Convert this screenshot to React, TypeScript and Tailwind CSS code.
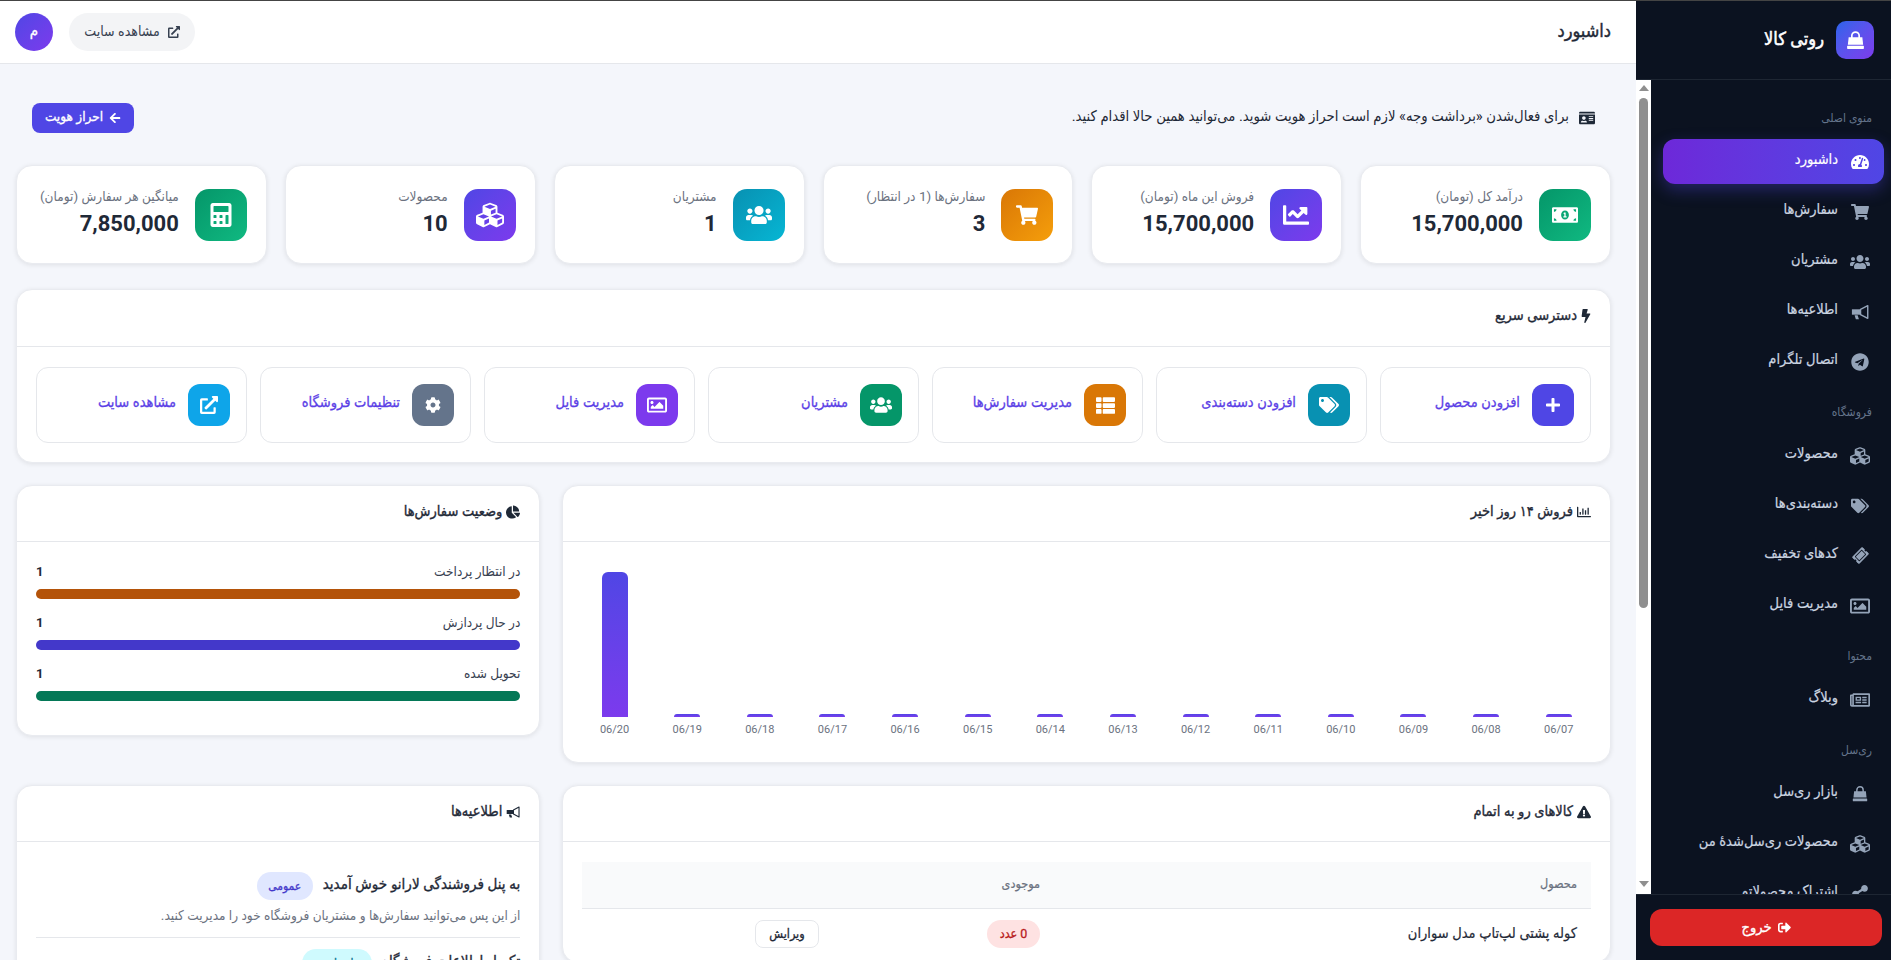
import type { ReactNode } from 'react';
import {
  FaTachometerAlt, FaShoppingCart, FaUsers, FaTelegram, FaCubes, FaTags, FaTicketAlt, FaRegImage,
  FaRegNewspaper, FaShareAlt, FaSignOutAlt, FaExternalLinkAlt, FaIdCard, FaArrowLeft, FaMoneyBillAlt,
  FaChartLine, FaCalculator, FaBolt, FaPlus, FaThList, FaCog, FaChartPie, FaRegChartBar, FaExclamationTriangle,
} from 'react-icons/fa';

function BagIcon() {
  return (
    <svg viewBox="0 0 20 20" width="1em" height="1em" fill="currentColor">
      <path d="M6.5 8V5.5a3.5 3.5 0 0 1 7 0V8" fill="none" stroke="currentColor" strokeWidth="1.6" />
      <path d="M3.5 7h13l.8 7H2.7z" />
      <rect x="2" y="15" width="16" height="3" rx="0.6" />
    </svg>
  );
}

function HornIcon() {
  return (
    <svg viewBox="0 0 20 20" width="1em" height="1em" fill="currentColor">
      <path d="M1 7h9v6H1z" />
      <path d="M10.6 7.2 18.6 3v14l-8-4.2z" fill="none" stroke="currentColor" strokeWidth="1.6" strokeLinejoin="round" />
      <path d="M4 13.5h3.4l1.4 4.5H5.4z" />
    </svg>
  );
}

const navGroups = [
  {
    title: 'منوی اصلی',
    items: [
      { label: 'داشبورد', icon: <FaTachometerAlt />, active: true },
      { label: 'سفارش‌ها', icon: <FaShoppingCart /> },
      { label: 'مشتریان', icon: <FaUsers className="text-[20px]" /> },
      { label: 'اطلاعیه‌ها', icon: <HornIcon /> },
      { label: 'اتصال تلگرام', icon: <FaTelegram /> },
    ],
  },
  {
    title: 'فروشگاه',
    items: [
      { label: 'محصولات', icon: <FaCubes className="text-[20px]" /> },
      { label: 'دسته‌بندی‌ها', icon: <FaTags /> },
      { label: 'کدهای تخفیف', icon: <FaTicketAlt className="-rotate-45 text-[15px]" /> },
      { label: 'مدیریت فایل', icon: <FaRegImage className="text-[20px]" /> },
    ],
  },
  { title: 'محتوا', items: [{ label: 'وبلاگ', icon: <FaRegNewspaper className="text-[20px]" /> }] },
  {
    title: 'ری‌سل',
    items: [
      { label: 'بازار ری‌سل', icon: <BagIcon /> },
      { label: 'محصولات ری‌سل‌شدهٔ من', icon: <FaCubes className="text-[20px]" /> },
      { label: 'اشتراک محصولاتم', icon: <FaShareAlt /> },
    ],
  },
];

const stats = [
  { label: 'درآمد کل (تومان)', value: '15,700,000', icon: <FaMoneyBillAlt className="text-[26px]" />, bg: 'bg-gradient-to-br from-[#059669] to-[#10b981]' },
  { label: 'فروش این ماه (تومان)', value: '15,700,000', icon: <FaChartLine className="text-[26px]" />, bg: 'bg-gradient-to-br from-[#4f46e5] to-[#7c3aed]' },
  { label: 'سفارش‌ها (1 در انتظار)', value: '3', icon: <FaShoppingCart className="text-[22px]" />, bg: 'bg-gradient-to-br from-[#d97706] to-[#f59e0b]' },
  { label: 'مشتریان', value: '1', icon: <FaUsers className="text-[26px]" />, bg: 'bg-gradient-to-br from-[#0891b2] to-[#06b6d4]' },
  { label: 'محصولات', value: '10', icon: <FaCubes className="text-[28px]" />, bg: 'bg-gradient-to-br from-[#4f46e5] to-[#7c3aed]' },
  { label: 'میانگین هر سفارش (تومان)', value: '7,850,000', icon: <FaCalculator className="text-[24px]" />, bg: 'bg-gradient-to-br from-[#059669] to-[#10b981]' },
];

const quickLinks = [
  { label: 'افزودن محصول', icon: <FaPlus className="text-[16px]" />, bg: 'bg-[#4f46e5]' },
  { label: 'افزودن دسته‌بندی', icon: <FaTags className="text-[20px]" />, bg: 'bg-[#0891b2]' },
  { label: 'مدیریت سفارش‌ها', icon: <FaThList className="text-[19px]" />, bg: 'bg-[#d97706]' },
  { label: 'مشتریان', icon: <FaUsers className="text-[22px]" />, bg: 'bg-[#059669]' },
  { label: 'مدیریت فایل', icon: <FaRegImage className="text-[20px]" />, bg: 'bg-[#7c3aed]' },
  { label: 'تنظیمات فروشگاه', icon: <FaCog className="text-[16px]" />, bg: 'bg-[#64748b]' },
  { label: 'مشاهده سایت', icon: <FaExternalLinkAlt className="text-[18px]" />, bg: 'bg-[#0ea5e9]' },
];

const orderStatus = [
  { label: 'در انتظار پرداخت', color: 'bg-[#b45309]' },
  { label: 'در حال پردازش', color: 'bg-[#4338ca]' },
  { label: 'تحویل شده', color: 'bg-[#047857]' },
];

const days = ['06/07', '06/08', '06/09', '06/10', '06/11', '06/12', '06/13', '06/14', '06/15', '06/16', '06/17', '06/18', '06/19', '06/20'];

function Card({ title, icon, tall, children }: { title: string; icon: ReactNode; tall?: boolean; children: ReactNode }) {
  return (
    <div className="bg-white border border-[#e9ebf0] rounded-2xl shadow-[0_1px_5px_rgba(0,0,0,0.09)] overflow-hidden">
      <div className={`flex items-center gap-1 px-[19px] pb-1 border-b border-[#e5e7eb] text-[14.5px] text-[#1f2937] [-webkit-text-stroke:0.35px] ${tall ? 'h-[57px]' : 'h-[56px]'}`}>
        <span className="text-[14px]">{icon}</span>
        <span>{title}</span>
      </div>
      {children}
    </div>
  );
}

function SidebarScrollbar() {
  return (
    <div className="w-[15px] shrink-0 bg-white flex flex-col items-center pt-[5px] pb-[7px]">
      <div className="w-0 h-0 border-x-[5px] border-x-transparent border-b-[6px] border-b-[#8f8f8f]" />
      <div className="w-[9px] h-[510px] mt-[7px] rounded-full bg-[#8f8f8f]" />
      <div className="flex-1" />
      <div className="w-0 h-0 border-x-[5px] border-x-transparent border-t-[6px] border-t-[#8f8f8f]" />
    </div>
  );
}

function Sidebar() {
  return (
    <aside className="w-[255px] shrink-0 h-full flex flex-col bg-[#0b1220]">
      <div className="h-[79px] shrink-0 flex items-center gap-3 pr-[17px] border-b border-[#1e2633]">
        <div className="w-[38px] h-[38px] rounded-[10px] bg-gradient-to-br from-[#2563eb] to-[#7c3aed] flex items-center justify-center text-white text-[21px]">
          <BagIcon />
        </div>
        <span className="text-white text-[18px] pb-1 [-webkit-text-stroke:0.5px]">روتی کالا</span>
      </div>
      <div className="flex-1 min-h-0 flex">
        <nav className="flex-1 min-w-0 overflow-hidden pr-[7px] pl-3 pt-[30px]">
          {navGroups.map((group, i) => (
            <div key={group.title}>
              <div className={`h-4 mb-[13px] pr-3 text-[12px] leading-4 text-[#64748b] ${i > 0 ? 'mt-[20px]' : ''}`}>{group.title}</div>
              {group.items.map((item) => (
                <a
                  key={item.label}
                  className={`h-[45px] mb-[5px] rounded-xl flex items-center gap-3 pr-[14px] text-[14.5px] [-webkit-text-stroke:0.2px] ${
                    item.active
                      ? 'bg-gradient-to-l from-[#4f46e5] to-[#6d28d9] text-white shadow-[0_6px_16px_rgba(79,70,229,0.35)]'
                      : 'text-[#cbd5e1]'
                  }`}
                >
                  <span className={`w-5 flex justify-center text-[18px] ${item.active ? 'text-white' : 'text-[#94a3b8]'}`}>{item.icon}</span>
                  <span className="whitespace-nowrap pb-1">{item.label}</span>
                </a>
              ))}
            </div>
          ))}
        </nav>
        <SidebarScrollbar />
      </div>
      <div className="h-[66px] shrink-0 border-t border-[#1e2633] pt-[14px] pr-[9px] pl-[14px]">
        <button className="w-full h-[37px] rounded-xl bg-[#dc2626] text-white text-[14.5px] [-webkit-text-stroke:0.35px] flex items-center justify-center gap-1.5">
          <FaSignOutAlt className="text-[13px]" />
          خروج
        </button>
      </div>
    </aside>
  );
}

export default function App() {
  return (
    <div dir="rtl" className="h-screen flex overflow-hidden border-t border-[#444] bg-[#f4f6fb] [font-family:Roboto,'DejaVu_Sans_Condensed','DejaVu_Sans',sans-serif]">
      <Sidebar />
      <main className="flex-1 min-w-0 h-full overflow-hidden">
        <header className="h-[63px] bg-white border-b border-[#e5e7eb] flex items-center justify-between pr-[25px] pl-[15px]">
          <h1 className="text-[18px] pb-1 font-normal text-[#1f2937] [-webkit-text-stroke:0.4px]">داشبورد</h1>
          <div className="flex items-center gap-4">
            <button className="w-[126px] h-[38px] rounded-full bg-[#f3f4f6] text-[#374151] text-[14px] flex items-center justify-center gap-2">
              <FaExternalLinkAlt className="text-[12px]" />
              <span className="pb-[2px]">مشاهده سایت</span>
            </button>
            <div className="w-[38px] h-[38px] pb-1 rounded-full bg-gradient-to-br from-[#4f46e5] to-[#7c3aed] text-white text-[15px] [-webkit-text-stroke:0.3px] flex items-center justify-center">م</div>
          </div>
        </header>

        <div className="pr-[25px] pl-4">
          <div className="flex items-center justify-between px-4 pt-[39px] pb-[32px]">
            <div className="flex items-center gap-[10px] text-[14.7px] text-[#1f2937]">
              <FaIdCard className="text-[16px]" />
              <span className="pb-1">برای فعال‌شدن «برداشت وجه» لازم است احراز هویت شوید. می‌توانید همین حالا اقدام کنید.</span>
            </div>
            <button className="w-[102px] h-[30px] rounded-lg bg-[#4f46e5] text-white text-[13.5px] [-webkit-text-stroke:0.3px] flex items-center justify-center gap-1.5">
              <FaArrowLeft className="text-[12px]" />
              <span className="pb-[3px]">احراز هویت</span>
            </button>
          </div>

          <div className="grid grid-cols-6 gap-[18px] mb-[25px]">
            {stats.map((s, i) => (
              <div key={i} className="h-[99px] bg-white border border-[#e9ebf0] rounded-2xl shadow-[0_1px_5px_rgba(0,0,0,0.09)] flex items-center gap-4 px-[19px]">
                <div className={`w-[52px] h-[52px] rounded-[14px] shrink-0 flex items-center justify-center text-white ${s.bg}`}>{s.icon}</div>
                <div className="min-w-0 pb-[6px]">
                  <div className="text-[13.5px] leading-5 pb-[2px] text-[#6b7280] whitespace-nowrap">{s.label}</div>
                  <div className="text-[22px] leading-7 mt-[2px] font-bold text-[#1f2937]">{s.value}</div>
                </div>
              </div>
            ))}
          </div>

          <div className="mb-[22px]">
            <Card tall title="دسترسی سریع" icon={<FaBolt className="w-[10px]" />}>
              <div className="grid grid-cols-7 gap-[13px] px-[19px] pt-5 pb-[19px]">
                {quickLinks.map((q) => (
                  <a key={q.label} className="h-[76px] rounded-xl border border-[#e5e7eb] flex items-center gap-3 px-4 text-[14.5px] text-[#5b3fe6] [-webkit-text-stroke:0.3px]">
                    <span className={`w-[42px] h-[42px] rounded-xl shrink-0 flex items-center justify-center text-white [-webkit-text-stroke:0] ${q.bg}`}>{q.icon}</span>
                    <span className="whitespace-nowrap pb-1">{q.label}</span>
                  </a>
                ))}
              </div>
            </Card>
          </div>

          <div className="grid grid-cols-[2fr_1fr] gap-[22px] items-start mb-[22px]">
            <Card title="فروش ۱۴ روز اخیر" icon={<FaRegChartBar />}>
              <div className="flex gap-2 px-[19px] pt-[30px] pb-[25px]">
                {days.map((d) => (
                  <div key={d} className="flex-1 flex flex-col items-center">
                    <div className="h-[145px] w-full flex items-end justify-center">
                      <div className={`w-[26px] bg-gradient-to-b from-[#4f46e5] to-[#7c3aed] rounded-t-md ${d === '06/20' ? 'h-[145px]' : 'h-[3px]'}`} />
                    </div>
                    <div className="mt-[6px] text-[11px] leading-[14px] text-[#6b7280]">{d}</div>
                  </div>
                ))}
              </div>
            </Card>
            <Card title="وضعیت سفارش‌ها" icon={<FaChartPie />}>
              <div className="px-[19px] pt-5 pb-5">
                {orderStatus.map((o) => (
                  <div key={o.label} className="mb-[14px]">
                    <div className="h-5 flex items-center justify-between text-[13.5px] text-[#374151]">
                      <span className="pb-[2px]">{o.label}</span>
                      <span className="text-[13px] font-bold text-[#1f2937]">1</span>
                    </div>
                    <div className={`h-[10px] mt-[7px] rounded-full ${o.color}`} />
                  </div>
                ))}
              </div>
            </Card>
          </div>

          <div className="grid grid-cols-[2fr_1fr] gap-[22px] items-start">
            <Card title="کالاهای رو به اتمام" icon={<FaExclamationTriangle />}>
              <div className="px-[19px] pt-5">
                <table className="w-full border-collapse table-fixed">
                  <thead>
                    <tr className="h-[46px] bg-[#f9fafb] border-b border-[#e5e7eb] text-[12.5px] text-[#6b7280] text-right [-webkit-text-stroke:0.2px]">
                      <th className="w-[537px] px-[14px] font-normal">محصول</th>
                      <th className="w-[221px] px-[14px] font-normal">موجودی</th>
                      <th />
                    </tr>
                  </thead>
                  <tbody>
                    <tr className="h-[54px]">
                      <td className="px-[14px] pb-[2px] text-[14.5px] text-[#1f2937] [-webkit-text-stroke:0.2px]">کوله پشتی لپ‌تاپ مدل سواران</td>
                      <td className="px-[14px] pb-[2px]">
                        <span className="inline-flex h-7 w-[53px] items-center justify-center rounded-full bg-[#fee2e2] text-[#b91c1c] text-[12.5px] [-webkit-text-stroke:0.3px]">0 عدد</span>
                      </td>
                      <td className="px-[14px] pb-[2px]">
                        <span className="inline-flex h-7 w-16 items-center justify-center rounded-lg border border-[#e5e7eb] text-[12.5px] text-[#1f2937] [-webkit-text-stroke:0.3px]">ویرایش</span>
                      </td>
                    </tr>
                  </tbody>
                </table>
              </div>
            </Card>
            <Card title="اطلاعیه‌ها" icon={<HornIcon />}>
              <div className="px-[19px] pt-[30px]">
                <div className="flex items-center gap-[10px] h-7">
                  <span className="text-[15px] text-[#1f2937] pb-1 [-webkit-text-stroke:0.35px]">به پنل فروشندگی لارانو خوش آمدید</span>
                  <span className="h-7 w-14 rounded-full bg-[#e0e7ff] text-[#4338ca] text-[12px] [-webkit-text-stroke:0.3px] flex items-center justify-center">عمومی</span>
                </div>
                <p className="mt-[5px] text-[13.5px] leading-5 text-[#6b7280]">از این پس می‌توانید سفارش‌ها و مشتریان فروشگاه خود را مدیریت کنید.</p>
                <div className="border-b border-[#e5e7eb] mt-3 mb-[11px]" />
                <div className="flex items-center gap-[10px] h-7">
                  <span className="text-[15px] text-[#1f2937] pb-1 [-webkit-text-stroke:0.35px]">تکمیل اطلاعات فروشگاه</span>
                  <span className="h-7 w-[70px] rounded-full bg-[#cffafe] text-[#0e7490] text-[12px] [-webkit-text-stroke:0.3px] flex items-center justify-center">اختیاری</span>
                </div>
              </div>
            </Card>
          </div>
        </div>
      </main>
    </div>
  );
}
